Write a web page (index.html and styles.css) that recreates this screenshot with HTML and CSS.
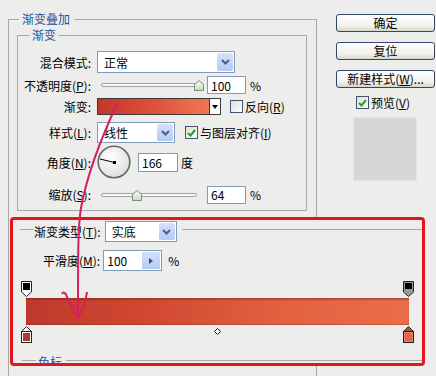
FILE: index.html
```html
<!DOCTYPE html>
<html lang="zh-CN">
<head>
    <meta charset="UTF-8">
    <meta name="viewport" content="width=device-width, initial-scale=1.0">
    <title>图层样式 - 渐变叠加</title>
    <link rel="stylesheet" href="styles.css">
</head>
<body>
    <div class="dialog">
        <div class="group outer">
            <div class="group-title">渐变叠加</div>
            <div class="group inner">
                <div class="group-title">渐变</div>
                <div class="row r1">
                    <span class="label">混合模式:</span>
                    <div class="select sel-mode">
                        <span class="select-text">正常</span>
                        <span class="select-btn"><svg width="9" height="6" viewBox="0 0 9 6"><polyline points="1,1 4.5,4.5 8,1" fill="none" stroke="#4a5f86" stroke-width="2"/></svg></span>
                    </div>
                </div>
                <div class="row r2">
                    <span class="label">不透明度(<u>P</u>):</span>
                    <div class="slider">
                        <div class="slider-track"></div>
                        <svg class="slider-thumb" style="left: 93px" width="10" height="11" viewBox="0 0 10 11"><defs><linearGradient id="th1" x1="0" y1="0" x2="0" y2="1"><stop offset="0" stop-color="#fff"/><stop offset="1" stop-color="#bfe0b5"/></linearGradient></defs><path d="M5,0.5 L9.5,4.5 V10.5 H0.5 V4.5 Z" fill="url(#th1)" stroke="#7d8c7d"/></svg>
                    </div>
                    <div class="field num">100</div>
                    <span class="unit">%</span>
                </div>
                <div class="row r3">
                    <span class="label">渐变:</span>
                    <div class="grad-pick">
                        <div class="grad-fill"></div>
                        <div class="grad-drop"></div>
                    </div>
                    <span class="check chk-reverse"></span>
                    <span class="check-text">反向(<u>R</u>)</span>
                </div>
                <div class="row r4">
                    <span class="label">样式(<u>L</u>):</span>
                    <div class="select sel-style">
                        <span class="select-text">线性</span>
                        <span class="select-btn"><svg width="9" height="6" viewBox="0 0 9 6"><polyline points="1,1 4.5,4.5 8,1" fill="none" stroke="#4a5f86" stroke-width="2"/></svg></span>
                    </div>
                    <span class="check chk-align"><svg width="9" height="8" viewBox="0 0 9 8"><polyline points="1,4 3.5,6.5 8,1" fill="none" stroke="#21a121" stroke-width="2"/></svg></span>
                    <span class="check-text">与图层对齐(<u>I</u>)</span>
                </div>
                <div class="row r5">
                    <span class="label">角度(<u>N</u>):</span>
                    <svg class="dial" width="34" height="34" viewBox="0 0 34 34">
                        <defs><radialGradient id="dg" cx="0.4" cy="0.35" r="0.7"><stop offset="0" stop-color="#fff"/><stop offset="1" stop-color="#dcdcdc"/></radialGradient></defs>
                        <circle cx="17" cy="17" r="15.8" fill="url(#dg)" stroke="#666" stroke-width="1.6"/>
                        <line x1="17.5" y1="17.5" x2="3" y2="14" stroke="#000" stroke-width="1"/>
                        <rect x="16" y="16" width="3" height="3" fill="#000"/>
                    </svg>
                    <div class="field angle">166</div>
                    <span class="unit deg">度</span>
                </div>
                <div class="row r6">
                    <span class="label">缩放(<u>S</u>):</span>
                    <div class="slider">
                        <div class="slider-track"></div>
                        <svg class="slider-thumb" style="left: 31px" width="10" height="11" viewBox="0 0 10 11"><defs><linearGradient id="th2" x1="0" y1="0" x2="0" y2="1"><stop offset="0" stop-color="#fff"/><stop offset="1" stop-color="#bfe0b5"/></linearGradient></defs><path d="M5,0.5 L9.5,4.5 V10.5 H0.5 V4.5 Z" fill="url(#th2)" stroke="#7d8c7d"/></svg>
                    </div>
                    <div class="field num">64</div>
                    <span class="unit">%</span>
                </div>
            </div>

            <div class="editor">
                <div class="type-row">
                    <span class="hr hr-left"></span>
                    <span class="type-label">渐变类型(<u>T</u>):</span>
                    <div class="select sel-type">
                        <span class="select-text">实底</span>
                        <span class="select-btn"><svg width="9" height="6" viewBox="0 0 9 6"><polyline points="1,1 4.5,4.5 8,1" fill="none" stroke="#4a5f86" stroke-width="2"/></svg></span>
                    </div>
                    <span class="hr hr-right"></span>
                </div>
                <div class="smooth-row">
                    <span class="smooth-label">平滑度(<u>M</u>):</span>
                    <div class="field smooth">
                        <span class="smooth-val">100</span>
                        <span class="spin"></span>
                    </div>
                    <span class="unit">%</span>
                </div>
                <div class="ramp">
                    <div class="stops">
                        <svg width="11" height="16" viewBox="0 0 11 16"><path d="M0.5,0.5H10.5V11L5.5,15.5L0.5,11Z" fill="#fff" stroke="#222"/><rect x="2" y="2" width="7" height="7" fill="#000"/></svg>
                        <svg width="11" height="16" viewBox="0 0 11 16"><path d="M0.5,0.5H10.5V11L5.5,15.5L0.5,11Z" fill="#9a9a9a" stroke="#222"/><rect x="2" y="2" width="7" height="6" fill="#000"/></svg>
                    </div>
                    <div class="bar"></div>
                    <div class="stops stops-color">
                        <svg width="11" height="17" viewBox="0 0 11 17"><path d="M5.5,0.5L10.5,5.5H0.5Z" fill="#fff" stroke="#222"/><rect x="0.5" y="5.5" width="10" height="11" fill="#fff" stroke="#222"/><rect x="2" y="7" width="7" height="8" fill="#b0392d"/></svg>
                        <svg class="mid" width="7" height="7" viewBox="0 0 7 7"><path d="M3.5,0.5L6.5,3.5L3.5,6.5L0.5,3.5Z" fill="#fff" stroke="#111"/></svg>
                        <svg width="11" height="17" viewBox="0 0 11 17"><path d="M5.5,0.5L10.5,5.5H0.5Z" fill="#a45a4a" stroke="#222"/><rect x="0.5" y="5.5" width="10" height="11" fill="#e5835f" stroke="#222"/><rect x="2" y="7" width="7" height="8" fill="#e1674a"/></svg>
                    </div>
                </div>
                <div class="swatch-head">
                    <span class="hr hr-short"></span>
                    <span class="swatch-title">色标</span>
                    <span class="hr hr-right"></span>
                </div>
            </div>
        </div>

        <div class="side">
            <div class="btn">确定</div>
            <div class="btn">复位</div>
            <div class="btn">新建样式(<u>W</u>)...</div>
            <div class="preview-row">
                <span class="check"><svg width="9" height="8" viewBox="0 0 9 8"><polyline points="1,4 3.5,6.5 8,1" fill="none" stroke="#21a121" stroke-width="2"/></svg></span>
                <span class="check-text">预览(<u>V</u>)</span>
            </div>
            <div class="preview"></div>
        </div>
    </div>

    <svg class="arrow" width="436" height="376" viewBox="0 0 436 376">
        <path d="M118,102 C101,138 87,175 81,208 C78,226 78,250 78,318" fill="none" stroke="#d81e63" stroke-width="2"/>
        <path d="M62,294 C63,291 66,293 67,297 C70,304 74,311 78,318" fill="none" stroke="#d81e63" stroke-width="2"/>
        <path d="M87,292 C86,301 83,309 78,318" fill="none" stroke="#d81e63" stroke-width="2"/>
    </svg>
</body>
</html>
```

FILE: styles.css
```css
* {
    box-sizing: border-box;
}
body {
    margin: 0;
    width: 436px;
    height: 376px;
    overflow: hidden;
    position: relative;
    background-color: #ededeb;
    font-family: "Noto Sans CJK SC", sans-serif;
    font-size: 12px;
    color: #000;
}
u {
    text-decoration-thickness: 1px;
    text-underline-offset: 1px;
}
.dialog {
    display: flex;
    align-items: flex-start;
}
.group {
    border: 1px solid #a8a8a8;
}
.group-title {
    width: fit-content;
    margin-top: -8px;
    line-height: 14px;
    color: #1d55a5;
    background: #ededeb;
}
.outer {
    flex: none;
    margin: 19px 0 0 8px;
    width: 309px;
    height: 400px;
    padding: 0 9px 0 8px;
}
.outer > .group-title {
    margin-left: 2px;
    padding: 0 4px 0 3px;
}
.inner {
    margin-top: 9px;
    padding-bottom: 6px;
}
.inner > .group-title {
    margin-left: 12px;
    padding: 0 2px;
}
.row {
    display: flex;
    align-items: center;
}
.label {
    flex: none;
    width: 73px;
    margin-right: 6px;
    text-align: right;
    white-space: nowrap;
}
.r1 { height: 22px; margin-top: 9px; }
.r2 { height: 20px; margin-top: 2px; }
.r3 { height: 19px; margin-top: 2px; }
.r4 { height: 21px; margin-top: 6px; }
.r5 { height: 34px; margin-top: 2px; }
.r6 { height: 19px; margin-top: 6px; }

.select {
    display: flex;
    height: 100%;
    background: #fff;
    border: 1px solid #7f9db9;
}
.select-text {
    flex: 1;
    display: flex;
    align-items: center;
    padding-left: 6px;
}
.select-btn {
    width: 16px;
    margin: 1px;
    border-radius: 2px;
    background: linear-gradient(#d6e1fb, #b5c9f2);
    display: flex;
    align-items: center;
    justify-content: center;
}
.sel-mode { width: 138px; }
.sel-style { width: 78px; }
.sel-type { width: 72px; height: 21px; margin-left: 4px; }

.field {
    background: #fff;
    border: 1px solid #7f9db9;
    display: flex;
    align-items: center;
    padding-left: 3px;
}
.num {
    width: 39px;
    height: 18px;
    margin-left: 3px;
}
.angle {
    width: 40px;
    height: 19px;
    margin-left: 7px;
}
.unit {
    margin-left: 4px;
}
.deg {
    margin-left: 3px;
}

.slider {
    position: relative;
    width: 103px;
    height: 14px;
    margin-left: 4px;
    display: flex;
    align-items: center;
}
.slider-track {
    width: 96px;
    height: 4px;
    border: 1px solid #a3a3a3;
    border-radius: 2px;
    background: #f7f7f7;
}
.slider-thumb {
    position: absolute;
    top: 2px;
}

.grad-pick {
    display: flex;
    width: 124px;
    height: 17px;
    border: 1px solid #3a3a3a;
}
.grad-fill {
    flex: 1;
    background: linear-gradient(90deg, #c3362a, #dd5139 50%, #f17652);
}
.grad-drop {
    width: 11px;
    border-left: 1px solid #3a3a3a;
    background: #fff;
    display: flex;
    align-items: center;
    justify-content: center;
}
.grad-drop::after {
    content: "";
    border-left: 3px solid transparent;
    border-right: 3px solid transparent;
    border-top: 4px solid #000;
}

.check {
    flex: none;
    width: 13px;
    height: 13px;
    border: 1px solid #3f5677;
    background: linear-gradient(135deg, #dedfd9, #fff);
    display: flex;
    align-items: center;
    justify-content: center;
}
.check-text {
    margin-left: 2px;
    white-space: nowrap;
}
.chk-reverse { margin-left: 9px; }
.chk-align { margin-left: 10px; }

.dial {
    flex: none;
}

/* editor pasted below, red outline */
.editor {
    margin: 6px 0 0 -7px;
    width: 415px;
    height: 149px;
    border: 3px solid #e3161e;
    border-radius: 4px;
    background: #ededeb;
    overflow: hidden;
}
.hr {
    height: 1px;
    background: #a8a8a8;
    align-self: flex-start;
}
.type-row {
    display: flex;
    align-items: center;
    height: 21px;
    margin-top: 1px;
    padding-left: 7px;
}
.type-row .hr {
    margin-top: 8px;
}
.hr-left {
    width: 13px;
}
.type-label {
    margin-left: 1px;
    white-space: nowrap;
}
.hr-right {
    flex: 1;
    margin-left: 5px;
}
.smooth-row {
    display: flex;
    align-items: center;
    height: 21px;
    margin-top: 8px;
    padding-left: 30px;
}
.smooth-label {
    white-space: nowrap;
}
.smooth {
    width: 59px;
    height: 21px;
    margin-left: 3px;
    align-items: stretch;
}
.smooth-val {
    flex: 1;
    display: flex;
    align-items: center;
}
.spin {
    width: 18px;
    margin: 1px;
    background: linear-gradient(#d6e1fb, #b5c9f2);
    display: flex;
    align-items: center;
    justify-content: center;
}
.spin::after {
    content: "";
    border-top: 3px solid transparent;
    border-bottom: 3px solid transparent;
    border-left: 4px solid #2f4d8a;
}
.smooth-row .unit {
    margin-left: 6px;
}
.ramp {
    width: 401px;
    margin-top: 10px;
    padding-left: 8px;
}
.stops {
    display: flex;
    justify-content: space-between;
    align-items: flex-start;
}
.stops svg {
    display: block;
}
.bar {
    height: 27px;
    margin: 1px 5px 0;
    background: linear-gradient(90deg, #bf382a, #d24a33 35%, #e1603f 65%, #ea6e4b);
    box-shadow: inset 0 2px 1px rgba(90, 30, 20, 0.35), inset 0 -1px 1px rgba(90, 30, 20, 0.25);
}
.stops-color {
    margin-top: 1px;
}
.stops-color .mid {
    margin-top: 2px;
}
.swatch-head {
    display: flex;
    height: 14px;
    margin-top: 12px;
    padding-left: 9px;
}
.swatch-head .hr {
    margin-top: 5px;
}
.hr-short {
    width: 14px;
}
.swatch-title {
    margin-left: 2px;
    line-height: 14px;
    color: #1d55a5;
}
.swatch-head .hr-right {
    margin-left: 4px;
}

.side {
    width: 99px;
    margin-left: 19px;
    padding-top: 14px;
    display: flex;
    flex-direction: column;
}
.btn {
    height: 18px;
    margin-bottom: 10px;
    border: 1px solid #34476b;
    border-radius: 3px;
    background: linear-gradient(#fff, #f1f0ec 70%, #d9d4c8);
    text-align: center;
    line-height: 16px;
}
.preview-row {
    display: flex;
    align-items: center;
    height: 13px;
    margin-top: -2px;
    padding-left: 20px;
}
.preview {
    width: 64px;
    height: 64px;
    margin: 8px 0 0 17px;
    background: #d6d6d6;
    border: 1px solid #e4e4e4;
}

.arrow {
    position: absolute;
    top: 0;
    left: 0;
    pointer-events: none;
}
```
